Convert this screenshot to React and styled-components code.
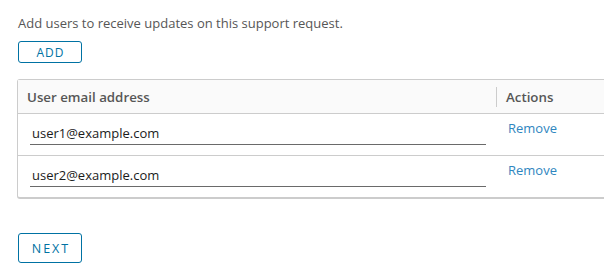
import React, { useState } from 'react';
import styled, { createGlobalStyle } from 'styled-components';

const GlobalStyle = createGlobalStyle`
    html, body {
        margin: 0;
        padding: 0;
        background: #fff;
        overflow: hidden;
    }
    body {
        font-family: "Open Sans", Lato, "Liberation Sans", sans-serif;
        color: #565656;
    }
`;

const Page = styled.div`
    padding: 14px 0 0 18px;
`;

const Intro = styled.p`
    margin: 0;
    font-size: 13px;
    line-height: 18px;
    color: #565656;
`;

const OutlineButton = styled.button`
    display: flex;
    align-items: center;
    justify-content: center;
    width: 64px;
    height: ${(p) => (p.$small ? '22px' : '30px')};
    margin-top: ${(p) => p.$top || 0}px;
    padding: 0 0 0 ${(p) => (p.$small ? '1px' : '2px')};
    border: 1px solid #0072a3;
    border-radius: 3px;
    background: #fff;
    color: #0072a3;
    font-family: inherit;
    font-size: ${(p) => (p.$small ? '12px' : '12.5px')};
    font-weight: 500;
    letter-spacing: ${(p) => (p.$small ? '1px' : '2px')};
    text-transform: uppercase;
    cursor: pointer;
`;

const Grid = styled.div`
    margin: 16px 0 0 -1px;
    width: 588px;
    box-sizing: border-box;
    display: grid;
    grid-template-columns: 479px 1fr;
    border: 1px solid #cccccc;
    border-bottom-width: 2px;
    border-radius: 3px 0 0 3px;
`;

const HeadCell = styled.div`
    position: relative;
    height: 33px;
    display: flex;
    align-items: center;
    padding: 0 9px;
    background: #fafafa;
    border-bottom: 1px solid #cccccc;
    font-size: 13.3px;
    font-weight: 600;
    color: #565656;

    ${(p) =>
        p.$divider &&
        `
        &::after {
            content: '';
            position: absolute;
            right: 0;
            top: 7px;
            bottom: 6px;
            width: 1px;
            background: #cccccc;
        }
    `}
`;

const Cell = styled.div`
    box-sizing: border-box;
    padding: ${(p) => (p.$action ? '2px 11px 0' : '8px 10px 0 12px')};
    border-top: ${(p) => (p.$first ? 'none' : '1px solid #cccccc')};
    height: ${(p) => (p.$first ? '41px' : '42px')};
`;

const EmailInput = styled.input`
    display: block;
    width: 456px;
    height: 23px;
    box-sizing: border-box;
    margin: 0;
    padding: 0 2px;
    border: none;
    border-bottom: 1px solid #6a6a6a;
    outline: none;
    background: transparent;
    font-family: inherit;
    font-size: 13px;
    color: #1b1b1b;
`;

const RemoveLink = styled.a`
    display: inline-block;
    font-size: 13px;
    line-height: 18px;
    color: #2f86c0;
    text-decoration: none;
    cursor: pointer;
`;

export default function App() {
    const [users, setUsers] = useState(['user1@example.com', 'user2@example.com']);

    const update = (i, value) => {
        setUsers((list) => list.map((u, j) => (j === i ? value : u)));
    };

    const remove = (i) => {
        setUsers((list) => list.filter((_, j) => j !== i));
    };

    return (
        <>
            <GlobalStyle />
            <Page>
                <Intro>Add users to receive updates on this support request.</Intro>
                <OutlineButton $small $top={9} onClick={() => setUsers((l) => [...l, ''])}>
                    Add
                </OutlineButton>
                <Grid>
                    <HeadCell $divider>User email address</HeadCell>
                    <HeadCell>Actions</HeadCell>
                    {users.map((u, i) => (
                        <React.Fragment key={i}>
                            <Cell $first={i === 0}>
                                <EmailInput value={u} onChange={(e) => update(i, e.target.value)} />
                            </Cell>
                            <Cell $first={i === 0} $action>
                                <RemoveLink onClick={() => remove(i)}>Remove</RemoveLink>
                            </Cell>
                        </React.Fragment>
                    ))}
                </Grid>
                <OutlineButton $top={34}>Next</OutlineButton>
            </Page>
        </>
    );
}
